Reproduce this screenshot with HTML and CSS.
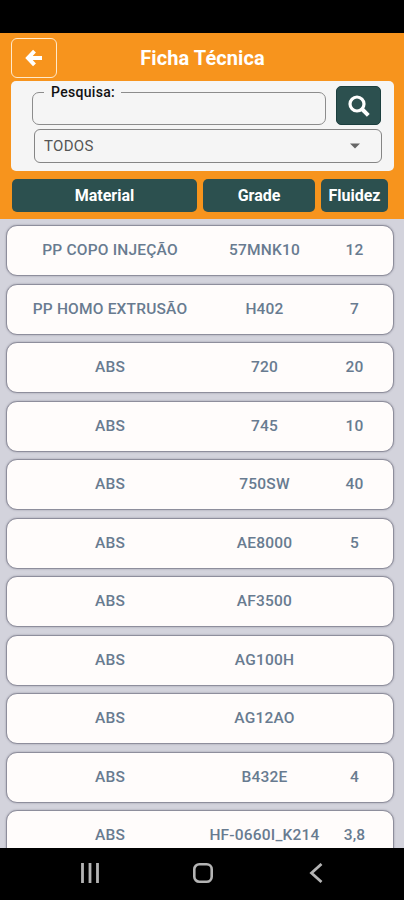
FILE: index.html
```html
<!DOCTYPE html>
<html lang="pt-BR">
<head>
  <meta charset="UTF-8">
  <meta name="viewport" content="width=device-width, initial-scale=1">
  <title>Ficha Técnica</title>
  <link rel="stylesheet" href="styles.css">
</head>
<body>

<div class="status-bar"></div>

<header>
  <div class="title-bar">
    <button class="back" aria-label="Voltar">
      <svg width="18" height="18" viewBox="0 0 18 18"><path d="M9.500 2.200 3 9l6.500 6.800M4 9H17" fill="none" stroke="#fff" stroke-width="4"/></svg>
    </button>
    <h1>Ficha Técnica</h1>
  </div>

  <div class="filters">
    <div class="search-row">
      <fieldset class="search-box">
        <legend>Pesquisa:</legend>
      </fieldset>
      <button class="search" aria-label="Pesquisar">
        <svg width="22" height="22" viewBox="0 0 22 22" fill="none" stroke="#fff"><circle cx="9" cy="9" r="7" stroke-width="3.200"/><path d="M14 14l6.300 6.300" stroke-width="4"/></svg>
      </button>
    </div>
    <div class="select">
      <span>TODOS</span>
      <svg width="10" height="6" viewBox="0 0 10 6"><path d="M0 .5h10L5 5.500z" fill="#666"/></svg>
    </div>
  </div>

  <div class="columns">
    <div>Material</div>
    <div>Grade</div>
    <div>Fluidez</div>
  </div>
</header>

<main>
  <div class="row"><span>PP COPO INJEÇÃO</span><span>57MNK10</span><span>12</span></div>
  <div class="row"><span>PP HOMO EXTRUSÃO</span><span>H402</span><span>7</span></div>
  <div class="row"><span>ABS</span><span>720</span><span>20</span></div>
  <div class="row"><span>ABS</span><span>745</span><span>10</span></div>
  <div class="row"><span>ABS</span><span>750SW</span><span>40</span></div>
  <div class="row"><span>ABS</span><span>AE8000</span><span>5</span></div>
  <div class="row"><span>ABS</span><span>AF3500</span><span></span></div>
  <div class="row"><span>ABS</span><span>AG100H</span><span></span></div>
  <div class="row"><span>ABS</span><span>AG12AO</span><span></span></div>
  <div class="row"><span>ABS</span><span>B432E</span><span>4</span></div>
  <div class="row"><span>ABS</span><span>HF-0660I_K214</span><span>3,8</span></div>
</main>

<nav>
  <svg width="20" height="20" viewBox="0 0 20 20"><path d="M2.500 0v20M10 0v20M17.500 0v20" stroke="#b4b4b4" stroke-width="2.800"/></svg>
  <svg width="20" height="20" viewBox="0 0 20 20"><rect x="1.300" y="1.300" width="17.400" height="17.400" rx="5" fill="none" stroke="#b4b4b4" stroke-width="2.600"/></svg>
  <svg width="20" height="20" viewBox="0 0 20 20"><path d="M15.500 1 5.500 10l10 9" fill="none" stroke="#b4b4b4" stroke-width="2.800"/></svg>
</nav>

</body>
</html>
```
FILE: styles.css
```css
* { box-sizing: border-box; }
body { font-family: Roboto, sans-serif; margin: 0; height: 900px; display: flex; flex-direction: column; overflow: hidden; background: #d3d3dc; }
button { border: none; padding: 0; display: flex; align-items: center; justify-content: center; }

.status-bar { flex: none; height: 33px; background: #000; }

header { flex: none; height: 186px; background: #f7941d; padding: 5px 10px 0 11px; }
.title-bar { display: grid; grid-template-columns: 46px 1fr 46px; align-items: center; height: 40px; }
.back { height: 40px; background: none; border: 1px solid #ffe9cb; border-radius: 6px; }
h1 { margin: 0; color: #fff; font-size: 20px; font-weight: 700; letter-spacing: 0.100px; text-align: center; }

.filters { height: 90px; margin-top: 3px; padding: 5px 13px 0 21px; background: #f5f5f5; border-radius: 5px; }
.search-row { display: flex; justify-content: space-between; height: 39px; }
.search-box { width: 294px; height: 39px; min-width: 0; margin: 0; padding: 0 0 0 11px; border: 1px solid #8c8c8c; border-radius: 7px; }
legend { padding: 0 6px 0 7px; font-size: 14px; font-weight: 500; line-height: 12px; letter-spacing: 0.300px; color: #111; }
.search { width: 45px; background: #2c504f; border: 1px solid #1c3f3f; border-radius: 5px; }
.select { display: flex; align-items: center; justify-content: space-between; height: 34px; margin: 4px -1px 0 2px; padding: 0 21px 0 9px; border: 1px solid #858585; border-radius: 6px; color: #555; font-size: 15px; letter-spacing: 0.300px; }

.columns { display: grid; grid-template-columns: 185px 112px 67px; gap: 6px; margin: 8px 0 0 1px; }
.columns div { height: 33px; line-height: 34px; background: #2c504f; border-radius: 5px; color: #fff; font-size: 16px; font-weight: 700; text-align: center; }

main { flex: 1; min-height: 0; overflow: hidden; display: flex; flex-direction: column; gap: 7.500px; padding: 6px 10px 0 6px; }
.row { flex: none; display: grid; grid-template-columns: 206px 103px 77px; align-items: center; height: 51px; padding-bottom: 1px; border: 1px solid #8e8e9c; border-radius: 11px; background: #fffcfb; box-shadow: 0 0 2px rgba(60, 60, 80, 0.400); color: #687b90; font-size: 15.500px; font-weight: 500; letter-spacing: 0.200px; text-align: center; }
.row span { white-space: nowrap; justify-self: center; }

nav { flex: none; height: 52px; background: #000; display: flex; gap: 93px; padding: 15px 0 0 80px; }
```
